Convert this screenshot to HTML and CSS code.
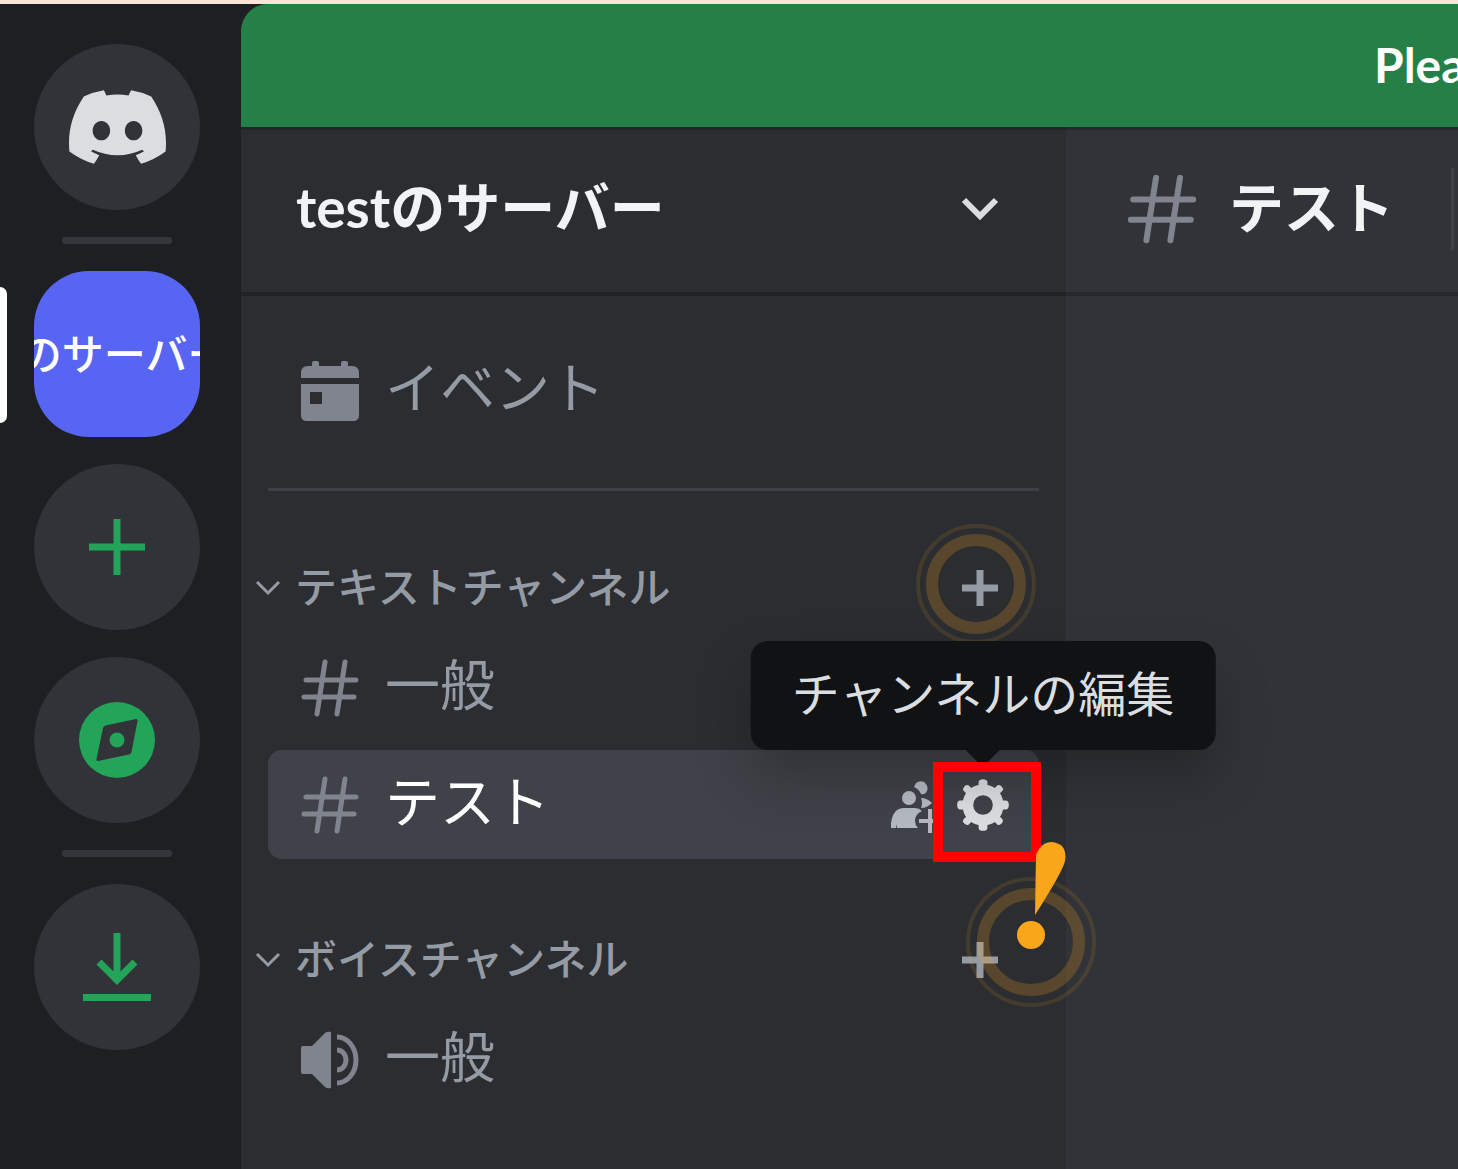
FILE: index.html
```html
<!DOCTYPE html>
<html lang="ja">
<head>
    <meta charset="UTF-8">
    <meta name="viewport" content="width=device-width, initial-scale=1.0">
    <title>テスト</title>
    <link rel="stylesheet" href="styles.css">
</head>
<body>
    <svg class="symbols" aria-hidden="true">
        <symbol id="hash" viewBox="0 0 58 60">
            <path fill="none" stroke="currentColor" stroke-width="5" stroke-linecap="round" d="M24 4L16 56M44 4L36 56M5 22H55M3 39H53"/>
        </symbol>
        <symbol id="chevron" viewBox="0 0 26 16">
            <path fill="none" stroke="currentColor" stroke-width="3" d="M2 2L13 13L24 2"/>
        </symbol>
        <symbol id="plus" viewBox="0 0 36 36">
            <path fill="none" stroke="currentColor" stroke-width="7" d="M18 0V36M0 18H36"/>
        </symbol>
    </svg>

    <div class="app">
        <nav class="rail" aria-label="サーバー">
            <a class="guild" href="#" aria-label="Discord">
                <svg width="97" height="74" viewBox="0 0 127.14 96.36"><path fill="#dbdee1" d="M107.7,8.07A105.15,105.15,0,0,0,81.47,0a72.06,72.06,0,0,0-3.36,6.83A97.68,97.68,0,0,0,49,6.83,72.37,72.37,0,0,0,45.64,0,105.89,105.89,0,0,0,19.39,8.09C2.79,32.65-1.71,56.6.54,80.21h0A105.73,105.73,0,0,0,32.71,96.36,77.7,77.7,0,0,0,39.6,85.25a68.42,68.42,0,0,1-10.85-5.18c.91-.66,1.8-1.34,2.66-2a75.57,75.57,0,0,0,64.32,0c.87.71,1.76,1.39,2.66,2a68.68,68.68,0,0,1-10.87,5.19,77,77,0,0,0,6.89,11.1A105.25,105.25,0,0,0,126.6,80.22h0C129.24,52.84,122.09,29.11,107.7,8.07ZM42.45,65.69C36.18,65.69,31,60,31,53s5-12.74,11.43-12.74S54,46,53.89,53,48.84,65.69,42.45,65.69Zm42.24,0C78.41,65.69,73.25,60,73.25,53s5-12.74,11.44-12.74S96.23,46,96.12,53,91.08,65.69,84.69,65.69Z"/></svg>
            </a>
            <hr class="rail-line">
            <div class="guild-wrap">
                <a class="guild guild-active" href="#"><span>tのサーバー</span></a>
            </div>
            <button class="guild" type="button" aria-label="サーバーを追加">
                <svg width="56" height="56" viewBox="0 0 56 56"><path fill="none" stroke="currentColor" stroke-width="7" d="M28 0V56M0 28H56"/></svg>
            </button>
            <button class="guild" type="button" aria-label="公開サーバーを探す">
                <svg width="76" height="76" viewBox="0 0 76 76"><path fill="currentColor" fill-rule="evenodd" d="M38 0A38 38 0 1 0 38 76A38 38 0 1 0 38 0ZM57 17Q59 17 58.500 19L52.500 50Q52 52 50 52.500L19 59Q17 59 17.500 57L24 26Q24.500 24 26.500 23.500ZM38 30.500A7.500 7.500 0 1 0 38 45.500A7.500 7.500 0 1 0 38 30.500Z"/></svg>
            </button>
            <hr class="rail-line">
            <a class="guild" href="#" aria-label="ダウンロード">
                <svg width="68" height="68" viewBox="0 0 68 68"><path fill="none" stroke="currentColor" stroke-width="7" d="M34 0V46M16 29L34 47L52 29M0 64.500H68"/></svg>
            </a>
        </nav>

        <div class="content">
            <div class="notice"><span class="notice-text">Plea</span></div>
            <div class="panels">
                <div class="sidebar">
                    <button class="server-header" type="button">
                        <span>testのサーバー</span>
                        <svg width="38" height="24" viewBox="0 0 38 24"><path fill="none" stroke="currentColor" stroke-width="6" d="M3 3L19 19L35 3"/></svg>
                    </button>

                    <ul class="channels">
                        <li class="channel">
                            <a href="#">
                                <svg class="channel-icon" viewBox="0 0 58 60"><path fill="currentColor" fill-rule="evenodd" d="M11 5V2Q11 0 13 0H16Q18 0 18 2V5H40V2Q40 0 42 0H45Q47 0 47 2V5H51Q58 5 58 12V17H0V12Q0 5 7 5ZM0 23H58V54Q58 60 52 60H6Q0 60 0 54ZM9 31V43H21V31Z"/></svg>
                                <span>イベント</span>
                            </a>
                        </li>
                    </ul>
                    <hr class="channels-line">

                    <section>
                        <h2 class="category">
                            <button class="category-name" type="button"><svg width="26" height="16"><use href="#chevron"/></svg><span>テキストチャンネル</span></button>
                            <button class="add" type="button" aria-label="チャンネルを作成">
                                <svg width="36" height="36"><use href="#plus"/></svg>
                                <svg class="ripple" width="122" height="122" viewBox="0 0 122 122">
                                    <circle class="ripple-main" cx="61" cy="61" r="44"/>
                                    <circle class="ripple-outer" cx="61" cy="61" r="58"/>
                                </svg>
                            </button>
                        </h2>
                        <ul class="channels">
                            <li class="channel">
                                <a href="#"><svg class="channel-icon"><use href="#hash"/></svg><span>一般</span></a>
                            </li>
                            <li class="channel channel-active">
                                <a href="#"><svg class="channel-icon"><use href="#hash"/></svg><span>テスト</span></a>
                                <button class="action" type="button" aria-label="招待を作成">
                                    <svg width="48" height="56" viewBox="0 0 48 56">
                                        <g fill="currentColor">
                                            <circle cx="18" cy="21" r="7"/>
                                            <path d="M25 6Q29 3 33 5Q38 9 36 14Q34 18 30 17Q28 12 23 10Z"/>
                                            <path d="M30 21Q36 21 41 26Q36 31 30 31Q32 26 30 21Z"/>
                                            <path d="M0 51V46Q2 31 13 31H24Q28 31 31 34Q24 37 24 44Q24 48 27 51H6V47L5 51Z"/>
                                        </g>
                                        <path fill="none" stroke="currentColor" stroke-width="4" d="M39 32V56M28 44H48"/>
                                    </svg>
                                </button>
                                <button class="action action-hover" type="button" aria-describedby="edit-tip" aria-label="チャンネルの編集">
                                    <svg width="62" height="62" viewBox="0 0 24 24"><path fill="currentColor" fill-rule="evenodd" d="M19.738 10.300H21Q22 10.500 22 12T21 13.700H19.739C19.498 14.931 19.1 15.798 18.565 16.564L19.600 17.600Q20 18.300 19.200 19.200T17.600 19.600L16.565 18.564C15.797 19.099 14.932 19.498 13.700 19.738V21Q13.500 22 12 22T10.300 21V19.738C9.069 19.498 8.203 19.099 7.436 18.564L6.400 19.600Q5.700 20 4.800 19.200T4.400 17.600L5.436 16.564C4.901 15.799 4.502 14.932 4.262 13.700H3Q2 13.500 2 12T3 10.300H4.262C4.502 9.068 4.9 8.202 5.436 7.436L4.400 6.400Q4 5.700 4.800 4.800T6.400 4.400L7.436 5.436C8.202 4.9 9.068 4.502 10.300 4.262V3Q10.500 2 12 2T13.700 3V4.261C14.932 4.502 15.797 4.9 16.565 5.435L17.600 4.400Q18.300 4 19.200 4.800T19.600 6.400L18.564 7.436C19.099 8.202 19.498 9.069 19.738 10.300ZM12 15.800A3.800 3.800 0 1 0 12 8.200A3.800 3.800 0 1 0 12 15.800Z"/></svg>
                                    <span class="tooltip" id="edit-tip" role="tooltip">チャンネルの編集</span>
                                    <span class="frame"></span>
                                </button>
                            </li>
                        </ul>
                    </section>

                    <section class="voice">
                        <h2 class="category">
                            <button class="category-name" type="button"><svg width="26" height="16"><use href="#chevron"/></svg><span>ボイスチャンネル</span></button>
                            <button class="add" type="button" aria-label="チャンネルを作成">
                                <svg width="36" height="36"><use href="#plus"/></svg>
                                <svg class="alert" width="134" height="170" viewBox="0 0 134 170">
                                    <circle class="ripple-main" cx="67" cy="103" r="48"/>
                                    <circle class="ripple-outer" cx="67" cy="103" r="63"/>
                                    <path fill="#faa61a" d="M71 76L72 16Q77 3 88 3Q104 5 101 22Q99 32 71 76Z"/>
                                    <circle fill="#faa61a" cx="67" cy="96" r="14"/>
                                </svg>
                            </button>
                        </h2>
                        <ul class="channels">
                            <li class="channel">
                                <a href="#">
                                    <svg class="channel-icon" viewBox="0 0 58 58">
                                        <path fill="currentColor" d="M2 15H11L24 2Q26 0 30 1V57Q26 58 24 56L11 43H2Q0 43 0 41V17Q0 15 2 15Z"/>
                                        <path fill="none" stroke="currentColor" stroke-width="5" d="M36 19A9 10 0 0 1 36 39M36 6A19 23 0 0 1 36 52"/>
                                    </svg>
                                    <span>一般</span>
                                </a>
                            </li>
                        </ul>
                    </section>
                </div>

                <main class="chat">
                    <header class="chat-header">
                        <svg width="70" height="72"><use href="#hash"/></svg>
                        <h1>テスト</h1>
                        <span class="chat-divider"></span>
                    </header>
                </main>
            </div>
        </div>
    </div>
</body>
</html>
```
FILE: styles.css
```css
* {
    box-sizing: border-box;
}
body {
    margin: 0;
    background-color: #1e1f22;
    color: #949ba4;
    font-family: Lato, "Noto Sans CJK JP", sans-serif;
    overflow: hidden;
}
button {
    background: none;
    border: none;
    padding: 0;
    color: inherit;
    font: inherit;
    cursor: pointer;
}
a {
    color: inherit;
    text-decoration: none;
}
ul, h1, h2 {
    list-style: none;
    margin: 0;
    padding: 0;
}
svg {
    display: block;
    flex-shrink: 0;
}
.symbols {
    position: absolute;
    width: 0;
    height: 0;
}
.app {
    display: flex;
    min-height: 100vh;
    border-top: 4px solid #fbe3d8;
}

/* server list */
.rail {
    width: 241px;
    flex-shrink: 0;
    display: flex;
    flex-direction: column;
    align-items: center;
    gap: 27px;
    padding: 40px 7px 0 0;
}
.guild {
    width: 166px;
    height: 166px;
    border-radius: 50%;
    background-color: #313338;
    color: #23a559;
    display: flex;
    align-items: center;
    justify-content: center;
    overflow: hidden;
}
.guild-active {
    border-radius: 55px;
    background-color: #5865f2;
    color: #fff;
    font-size: 42px;
    font-weight: 500;
    white-space: nowrap;
}
.guild-active span {
    padding-bottom: 6px;
}
.guild-wrap {
    position: relative;
    width: 100%;
    display: flex;
    justify-content: center;
}
.guild-wrap::before {
    content: "";
    position: absolute;
    left: 0;
    top: 16px;
    width: 7px;
    height: 136px;
    border-radius: 0 14px 14px 0;
    background-color: #fff;
}
.rail-line {
    width: 110px;
    height: 7px;
    margin: 0;
    border: none;
    border-radius: 3px;
    background-color: #35363c;
}

.content {
    flex: 1;
    min-width: 0;
    display: flex;
    flex-direction: column;
}
.notice {
    height: 123px;
    display: flex;
    align-items: center;
    border-top-left-radius: 27px;
    background-color: #248046;
    overflow: hidden;
}
.notice-text {
    margin-left: calc(100% - 84px);
    padding-bottom: 2px;
    color: #fff;
    font-size: 48px;
    font-weight: 700;
    line-height: 58px;
}
.panels {
    flex: 1;
    display: flex;
}

/* channel list */
.sidebar {
    position: relative;
    z-index: 1;
    width: 825px;
    flex-shrink: 0;
    background-color: #2b2d31;
}
.server-header {
    width: 100%;
    height: 169px;
    display: flex;
    align-items: center;
    justify-content: space-between;
    padding: 0 67px 4px 55px;
    border-top: 3px solid #242529;
    border-bottom: 4px solid #202225;
    color: #f2f3f5;
    font-size: 55px;
    font-weight: 700;
}
.server-header span {
    padding-bottom: 10px;
}
.server-header svg {
    color: #dbdee1;
}
.channels {
    display: flex;
    flex-direction: column;
    gap: 8px;
    padding: 0 27px;
}
.server-header + .channels {
    margin-top: 40px;
}
.channel {
    height: 109px;
    display: flex;
    align-items: center;
    padding: 0 25px 0 33px;
    border-radius: 14px;
}
.channel a {
    flex: 1;
    display: flex;
    align-items: center;
    gap: 26px;
    font-size: 55px;
    line-height: 70px;
}
.channel a span {
    padding-bottom: 8px;
}
.channel-icon {
    width: 58px;
    height: 60px;
    color: #80848e;
}
.channel-active {
    background-color: #404249;
}
.channel-active a span {
    color: #fff;
}
.channels-line {
    height: 3px;
    margin: 43px 27px 56px;
    border: none;
    background-color: #3f4147;
}
.category {
    height: 82px;
    margin-bottom: 4px;
    display: flex;
    align-items: center;
    justify-content: space-between;
    padding: 0 68px 0 14px;
    font-size: 42px;
    font-weight: 500;
}
.category-name {
    display: flex;
    align-items: center;
    gap: 14px;
}
.category-name span {
    padding-bottom: 8px;
}
.voice {
    margin-top: 60px;
}

.add, .action {
    position: relative;
}
.action {
    color: #b5bac1;
    margin-right: 13px;
}
.action-hover {
    margin-right: 0;
    color: #dbdee1;
}
.ripple, .alert {
    position: absolute;
    pointer-events: none;
}
.ripple {
    left: -47px;
    top: -47px;
}
.alert {
    left: 2px;
    top: -103px;
}
.ripple-main, .ripple-outer {
    fill: none;
    stroke: #faa61a;
}
.ripple-main {
    stroke-width: 12px;
    opacity: 0.22;
}
.ripple-outer {
    stroke-width: 4px;
    opacity: 0.12;
}
.tooltip {
    position: absolute;
    left: 50%;
    bottom: calc(100% + 24px);
    transform: translateX(-50%);
    height: 109px;
    padding: 0 41px;
    border-radius: 17px;
    background-color: #111214;
    box-shadow: 0 28px 55px rgba(0, 0, 0, 0.24);
    color: #dbdee1;
    font-size: 48px;
    line-height: 106px;
    white-space: nowrap;
}
.tooltip::after {
    content: "";
    position: absolute;
    left: 50%;
    top: 100%;
    margin-left: -17px;
    border: 17px solid transparent;
    border-top-color: #111214;
}
.frame {
    position: absolute;
    left: -19px;
    top: -12px;
    width: 108px;
    height: 100px;
    border: 10px solid #f00;
}

/* chat area */
.chat {
    flex: 1;
    min-width: 0;
    background-color: #313338;
    overflow: hidden;
}
.chat-header {
    height: 169px;
    display: flex;
    align-items: center;
    padding: 0 0 4px 61px;
    border-top: 3px solid #28292e;
    border-bottom: 4px solid #26282c;
    color: #80848e;
}
.chat-header h1 {
    margin-left: 32px;
    padding-bottom: 10px;
    color: #f2f3f5;
    font-size: 55px;
    font-weight: 700;
    white-space: nowrap;
}
.chat-divider {
    flex-shrink: 0;
    width: 3px;
    height: 82px;
    margin-left: 57px;
    background-color: #3f4147;
}
```
